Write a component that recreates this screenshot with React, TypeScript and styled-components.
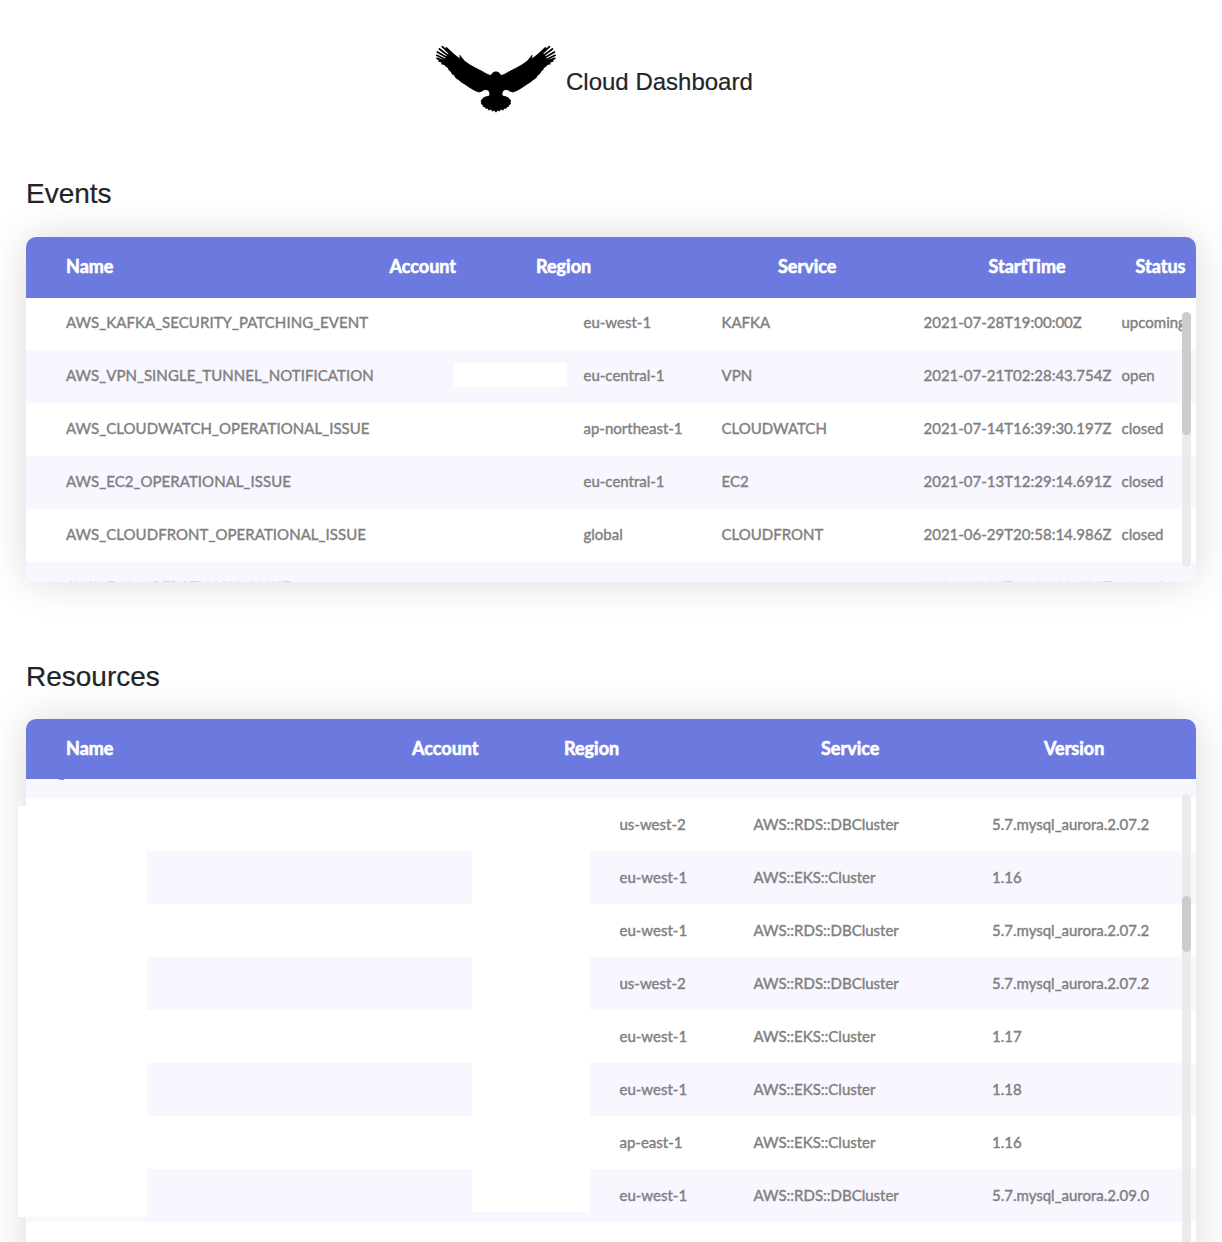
import React from "react";
import styled, { createGlobalStyle } from "styled-components";

const GlobalStyle = createGlobalStyle`
  *, *::before, *::after { box-sizing: border-box; }
  html, body { margin: 0; background: #fff; }
  body { overflow: hidden; }
`;

const Page = styled.div`
  display: flex;
  flex-direction: column;
  height: 1242px;
  overflow: hidden;
  padding: 0 26px;
  color: #212529;
  font-family: "Liberation Sans", Helvetica, Arial, sans-serif;
`;

const Brand = styled.header`
  display: flex;
  flex: none;
  align-items: flex-start;
  gap: 10px;
  height: 178px;
  padding: 45px 0 0 410px;
`;

const Logo = styled.svg`
  display: block;
  overflow: visible;
  width: 120px;
  height: 68px;
  stroke: #000;
  stroke-width: 2.6;
  stroke-linejoin: round;
  stroke-linecap: round;
`;

const Title = styled.h1`
  margin: 22px 0 0;
  font-size: 24px;
  font-weight: 400;
  line-height: 29px;
  -webkit-text-stroke: 0.2px currentColor;
`;

const Section = styled.section<{ $height: number }>`
  flex: none;
  height: ${(p) => p.$height}px;
`;

const Heading = styled.h2<{ $lineHeight: number }>`
  margin: 0;
  height: 59px;
  font-size: 28px;
  font-weight: 400;
  line-height: ${(p) => p.$lineHeight}px;
  -webkit-text-stroke: 0.2px currentColor;
`;

const Card = styled.div<{ $height: number }>`
  position: relative;
  height: ${(p) => p.$height}px;
  border-radius: 10px;
  box-shadow: 0 0 40px rgba(0, 0, 0, 0.15);
  font-family: Lato, sans-serif;
`;

const Clip = styled.div`
  display: flex;
  flex-direction: column;
  height: 100%;
  overflow: hidden;
  border-radius: 10px;
  background: #fff;
`;

const HeadRow = styled.div<{ $columns: string; $height: number }>`
  position: relative;
  z-index: 1;
  display: grid;
  flex: none;
  grid-template-columns: ${(p) => p.$columns};
  align-content: start;
  height: ${(p) => p.$height}px;
  padding: 16.5px 0 0 40px;
  background: #6c7ae0;
  color: #fff;
  font-size: 18px;
  font-weight: 700;
  line-height: 25px;
  white-space: nowrap;
  -webkit-text-stroke: 0.6px currentColor;
`;

const Body = styled.div<{ $scrolled: number }>`
  flex: none;
  margin-top: -${(p) => p.$scrolled}px;
`;

const Row = styled.div<{ $columns: string; $tinted: boolean; $lift: number }>`
  display: grid;
  grid-template-columns: ${(p) => p.$columns};
  align-items: center;
  height: 53px;
  padding: 0 0 ${(p) => 1 + p.$lift * 2}px 40px;
  background: ${(p) => (p.$tinted ? "#f8f6ff" : "#fff")};
  color: #808080;
  font-size: 15px;
  line-height: 21px;
  white-space: nowrap;
  -webkit-text-stroke: 0.4px currentColor;
`;

const Cell = styled.span`
  min-width: 0;
`;

const NameCell = styled(Cell)`
  letter-spacing: 0.055px;
`;

const Rail = styled.div<{ $height: number }>`
  position: absolute;
  z-index: 2;
  top: 75px;
  right: 5px;
  width: 9px;
  height: ${(p) => p.$height}px;
  border-radius: 5px;
  background: #ebebeb;
`;

const Thumb = styled.div<{ $top: number; $height: number }>`
  height: ${(p) => p.$height}px;
  margin-top: ${(p) => p.$top}px;
  border-radius: 5px;
  background: #ccc;
`;

const Redaction = styled.div<{ $x: number; $y: number; $w: number; $h: number; $color?: string }>`
  position: absolute;
  z-index: 3;
  left: ${(p) => p.$x}px;
  top: ${(p) => p.$y}px;
  width: ${(p) => p.$w}px;
  height: ${(p) => p.$h}px;
  background: ${(p) => p.$color ?? "#fff"};
`;

interface TableProps {
  height: number;
  headHeight: number;
  headColumns: string;
  columns: string;
  head: string[];
  rows: string[][];
  firstTinted?: boolean;
  scrolled?: number;
  lift?: number;
  rail: number;
  thumb: [number, number];
  covers: [number, number, number, number, string?][];
}

function DataTable(p: TableProps) {
  return (
    <Card $height={p.height}>
      <Clip>
        <HeadRow $columns={p.headColumns} $height={p.headHeight}>
          {p.head.map((label) => (
            <Cell key={label}>{label}</Cell>
          ))}
        </HeadRow>
        <Body $scrolled={p.scrolled ?? 0}>
          {p.rows.map(([name, ...rest], i) => (
            <Row
              key={i}
              $columns={p.columns}
              $tinted={(i % 2 === 1) !== Boolean(p.firstTinted)}
              $lift={p.lift ?? 0}
            >
              <NameCell>{name}</NameCell>
              {rest.map((value, j) => (
                <Cell key={j}>{value}</Cell>
              ))}
            </Row>
          ))}
        </Body>
      </Clip>
      <Rail $height={p.rail}>
        <Thumb $top={p.thumb[0]} $height={p.thumb[1]} />
      </Rail>
      {p.covers.map(([x, y, w, h, color]) => (
        <Redaction key={`${x}-${y}`} $x={x} $y={y} $w={w} $h={h} $color={color} />
      ))}
    </Card>
  );
}

const events = [
  ["AWS_KAFKA_SECURITY_PATCHING_EVENT", "eu-west-1", "KAFKA", "2021-07-28T19:00:00Z", "upcoming"],
  ["AWS_VPN_SINGLE_TUNNEL_NOTIFICATION", "eu-central-1", "VPN", "2021-07-21T02:28:43.754Z", "open"],
  ["AWS_CLOUDWATCH_OPERATIONAL_ISSUE", "ap-northeast-1", "CLOUDWATCH", "2021-07-14T16:39:30.197Z", "closed"],
  ["AWS_EC2_OPERATIONAL_ISSUE", "eu-central-1", "EC2", "2021-07-13T12:29:14.691Z", "closed"],
  ["AWS_CLOUDFRONT_OPERATIONAL_ISSUE", "global", "CLOUDFRONT", "2021-06-29T20:58:14.986Z", "closed"],
  ["AWS_EC2_OPERATIONAL_ISSUE", "", "", "2021-06-26T08:28:38.686Z", "closed"],
];

const cluster = "AWS::RDS::DBCluster";
const eks = "AWS::EKS::Cluster";
const aurora = "5.7.mysql_aurora.2.07.2";
const resources = [
  ["", "", "", ""],
  ["", "us-west-2", cluster, aurora],
  ["", "eu-west-1", eks, "1.16"],
  ["", "eu-west-1", cluster, aurora],
  ["", "us-west-2", cluster, aurora],
  ["", "eu-west-1", eks, "1.17"],
  ["", "eu-west-1", eks, "1.18"],
  ["", "ap-east-1", eks, "1.16"],
  ["", "eu-west-1", cluster, "5.7.mysql_aurora.2.09.0"],
  ["", "", "", ""],
];

/* Left half of the eagle; the right half mirrors it around the body axis. */
const wing =
  "M210 108 L203 109 L199 112 L197 117 L191 118 L180 113 L166 105 L150 97 L132 87 L116 76 L101 58 L104 68 L97 65 L83 55 L76 49 L64 57 L57 72 L58 84 L55 86 L62 93 L67 95 L69 102 L74 105 L78 113 L85 118 L90 126 L98 131 L106 138 L116 144 L126 151 L137 158 L148 164 L159 168 L168 165 L174 161 L184 161 L190 167 L192 174 L190 180 L178 183 L171 187 L165 195 L167 199 L166 204 L172 207 L171 211 L177 212 L179 217 L185 216 L188 222 L194 220 L200 225 L205 223 L210 227 Z";

/* Flight feathers at the wing tip. */
const feathers =
  "M61 36 L86 60 M49 32 L78 60 M40 39 L74 64 M34 48 L70 69 M32 58 L68 76 M33 67 L66 79 M39 75 L66 83 M48 83 L68 86";

function EagleHalf() {
  return (
    <>
      <path d={wing} />
      <path d={feathers} strokeWidth={5.2} />
    </>
  );
}

function Eagle() {
  return (
    <Logo viewBox="30 27 360 204" aria-label="Eagle">
      <EagleHalf />
      <g transform="translate(419.4 0) scale(-1 1)">
        <EagleHalf />
      </g>
    </Logo>
  );
}

export default function App() {
  return (
    <>
      <GlobalStyle />
      <Page>
        <Brand>
          <Eagle />
          <Title>Cloud Dashboard</Title>
        </Brand>
        <Section $height={482}>
          <Heading $lineHeight={31}>Events</Heading>
          <DataTable
            height={345}
            headHeight={61}
            headColumns="323.5px 146.5px 242px 210.5px 147px 1fr"
            columns="517.5px 138px 202px 198px 1fr"
            head={["Name", "Account", "Region", "Service", "StartTime", "Status"]}
            rows={events}
            scrolled={1}
            lift={1}
            rail={255}
            thumb={[0, 123]}
            covers={[[428, 126, 113, 24]]}
          />
        </Section>
        <Section $height={700}>
          <Heading $lineHeight={33}>Resources</Heading>
          <DataTable
            height={620}
            headHeight={60}
            headColumns="346px 152px 257px 223px 1fr"
            columns="553.5px 134px 238.5px 1fr"
            head={["Name", "Account", "Region", "Service", "Version"]}
            rows={resources}
            firstTinted
            scrolled={34}
            rail={530}
            thumb={[102, 56]}
            covers={[
              [-8, 87, 129, 411],
              [446, 79, 118, 414],
              [33, 60, 5, 1, "#9a99a3"],
            ]}
          />
        </Section>
      </Page>
    </>
  );
}
